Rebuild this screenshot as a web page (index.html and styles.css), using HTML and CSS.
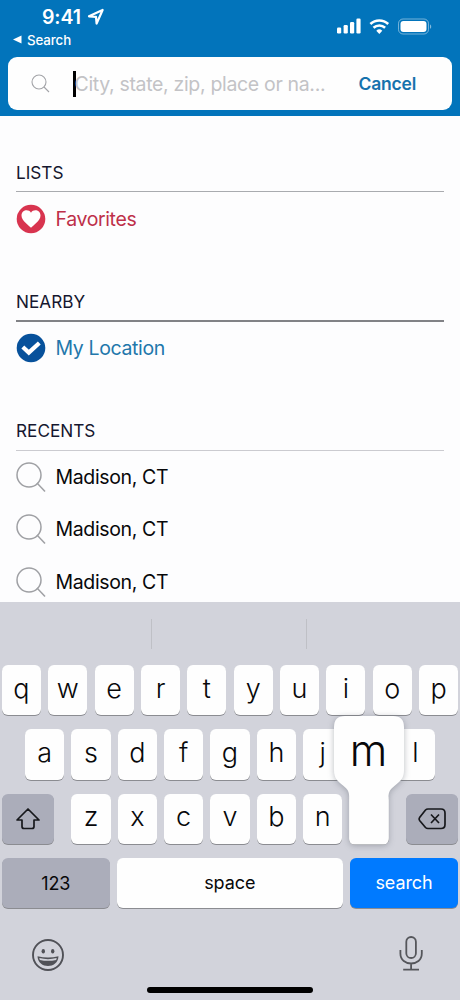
FILE: index.html
```html
<!DOCTYPE html>
<html lang="en">
<head>
<meta charset="utf-8">
<title>Search</title>
<link rel="stylesheet" href="styles.css">
</head>
<body>
<div class="phone">
  <header class="header">
    <div class="status">
      <div class="status-left">
        <div class="clock"><span class="time">9:41</span>
          <svg class="arrow" width="18" height="18" viewBox="0 0 18 18"><path d="M2 8.300 15.600 2 9.600 15.600 9 8.900Z" fill="none" stroke="#fff" stroke-width="2.200" stroke-linejoin="round"/></svg>
        </div>
        <div class="back"><svg width="9" height="9" viewBox="0 0 9 9"><path d="M0 4.500 8.500.500v8Z" fill="#fff"/></svg><span class="back-label">Search</span></div>
      </div>
      <svg class="indicators" width="96" height="20" viewBox="0 0 96 20">
        <g fill="#fff">
          <rect x="1" y="11.500" width="4.200" height="6" rx="1.200"/><rect x="7.600" y="9" width="4.200" height="8.500" rx="1.200"/><rect x="14" y="6" width="4.200" height="11.500" rx="1.200"/><rect x="20.400" y="2.500" width="4.200" height="15" rx="1.200"/>
          <path d="m43.300 18-3-3.300a4.500 4.500 0 0 1 6 0Z"/>
          <rect x="64.500" y="5" width="26" height="11" rx="3"/>
          <path d="M94 8.500c1.600.300 1.600 4 0 4.300Z" opacity=".5"/>
        </g>
        <path d="M34.400 8a13 13 0 0 1 17.800 0M37.500 11.700a8.700 8.700 0 0 1 11.600 0" fill="none" stroke="#fff" stroke-width="2.600"/>
        <rect x="62.500" y="3" width="30" height="15" rx="4.500" fill="none" stroke="#fff" opacity=".45"/>
      </svg>
    </div>
    <div class="search">
      <svg class="search-icon" width="19" height="19" viewBox="0 0 19 19"><g fill="none" stroke="#a3a4a8" stroke-width="1.100"><circle cx="8" cy="8" r="7"/><path d="m13 13 5 5"/></g></svg>
      <span class="caret"></span>
      <span class="placeholder">City, state, zip, place or na...</span>
      <span class="cancel">Cancel</span>
    </div>
  </header>

  <main class="content">
    <section class="group">
      <h2 class="heading">LISTS</h2>
      <div class="row favorite">
        <svg class="icon" width="30" height="30" viewBox="0 0 30 30"><circle cx="15" cy="15" r="14.300" fill="#d8344f"/><path d="M15 23.800C12.500 21 5.500 16.800 5.500 11.500c0-5.500 7-6.800 9.500-2.800 2.500-4 9.500-2.700 9.500 2.800 0 5.300-7 9.500-9.500 12.300Z" fill="#fff"/></svg>
        <span>Favorites</span>
      </div>
    </section>
    <section class="group">
      <h2 class="heading heading-dark">NEARBY</h2>
      <div class="row location">
        <svg class="icon" width="30" height="30" viewBox="0 0 30 30"><circle cx="15" cy="15" r="14.300" fill="#07519b"/><path d="m6.800 14 6 5.600L23.300 10" fill="none" stroke="#fff" stroke-width="4.200"/></svg>
        <span>My Location</span>
      </div>
    </section>
    <section class="group">
      <h2 class="heading heading-light">RECENTS</h2>
      <div class="row"><svg class="icon" width="30" height="30" viewBox="0 0 30 30"><g fill="none" stroke="#9fa0a4" stroke-width="1.500"><circle cx="13" cy="13" r="12"/><path d="m21 21 8 8.500"/></g></svg><span>Madison, CT</span></div>
      <div class="row"><svg class="icon" width="30" height="30" viewBox="0 0 30 30"><g fill="none" stroke="#9fa0a4" stroke-width="1.500"><circle cx="13" cy="13" r="12"/><path d="m21 21 8 8.500"/></g></svg><span>Madison, CT</span></div>
      <div class="row"><svg class="icon" width="30" height="30" viewBox="0 0 30 30"><g fill="none" stroke="#9fa0a4" stroke-width="1.500"><circle cx="13" cy="13" r="12"/><path d="m21 21 8 8.500"/></g></svg><span>Madison, CT</span></div>
    </section>
  </main>

  <div class="keyboard">
    <div class="suggestions"><span></span><span></span><span></span></div>
    <div class="keys">
      <div class="key-row"><span class="key">q</span><span class="key">w</span><span class="key">e</span><span class="key">r</span><span class="key">t</span><span class="key">y</span><span class="key">u</span><span class="key">i</span><span class="key">o</span><span class="key">p</span></div>
      <div class="key-row"><span class="key">a</span><span class="key">s</span><span class="key">d</span><span class="key">f</span><span class="key">g</span><span class="key">h</span><span class="key">j</span><span class="key"></span><span class="key">l</span></div>
      <div class="key-row spread">
        <span class="key mod"><svg width="26" height="24" viewBox="0 0 26 24"><path d="M13 2 2 13h5v6.500q0 2 2 2h8q2 0 2-2V13h5Z" fill="none" stroke="#17181c" stroke-width="1.700" stroke-linejoin="round"/></svg></span>
        <div class="key-row">
          <span class="key">z</span><span class="key">x</span><span class="key">c</span><span class="key">v</span><span class="key">b</span><span class="key">n</span>
          <span class="key pressed">
            <svg class="bubble" width="90" height="140" viewBox="0 0 90 140"><path d="M21 6H69Q80 6 80 17V60C80 69 76 71 71 75.500C66 80 64.500 81 64.500 88V129Q64.500 134.500 59 134.500H31Q25.200 134.500 25.200 129V88C25.200 81 24 80 19 75.500C14 71 10 69 10 60V17Q10 6 21 6Z" fill="#fefefe"/></svg>
            <span class="big">m</span>
          </span>
        </div>
        <span class="key mod"><svg width="30" height="24" viewBox="0 0 30 24"><path d="M11 2H24Q28 2 28 6V17.500Q28 21.500 24 21.500H11Q9.500 21.500 8.500 20.500L2.600 13.500Q1.500 12 2.600 10.500L8.500 3Q9.500 2 11 2ZM14 7.500l8 8.500m0-8.500-8 8.500" fill="none" stroke="#17181c" stroke-width="1.700" stroke-linejoin="round"/></svg></span>
      </div>
      <div class="key-row bottom"><span class="key mod label">123</span><span class="key label">space</span><span class="key go label">search</span></div>
    </div>
    <div class="dock">
      <svg width="34" height="34" viewBox="0 0 34 34"><circle cx="17" cy="17" r="15" fill="none" stroke="#505157" stroke-width="1.900"/><ellipse cx="12.300" cy="13.300" rx="1.700" ry="2.300" fill="#505157"/><ellipse cx="21.700" cy="13.300" rx="1.700" ry="2.300" fill="#505157"/><path d="M6.500 18.200q10.500 2.800 21 0c-.5 13-20.500 13-21 0Z" fill="#505157"/><path d="M8.300 20q8.700 2.300 17.400 0l-.5 1.900q-8.200 1.800-16.400 0Z" fill="#d2d3db"/></svg>
      <svg width="26" height="37" viewBox="0 0 26 37"><g fill="none" stroke="#55565b" stroke-width="1.800"><rect x="8.300" y="2" width="9.600" height="21" rx="4.800"/><path d="M2.400 15v3.500c0 13.300 21.400 13.300 21.400 0V15M13.100 28.500v6M5.200 34.600h15.800"/></g></svg>
    </div>
    <div class="home"></div>
  </div>
</div>
</body>
</html>
```
FILE: styles.css
```css
* { box-sizing: border-box; }
body { margin: 0; font-family: Inter, "Liberation Sans", sans-serif; background: #fdfdfe; }
svg { display: block; flex: none; }
.phone { width: 460px; height: 1000px; display: flex; flex-direction: column; overflow: hidden; background: #fdfdfe; }
.header { height: 116px; flex: none; background: #0274bb; color: #fff; }
.status { height: 57px; display: flex; justify-content: space-between; padding: 7px 2px 0 13px; }
.clock { display: flex; align-items: center; gap: 6px; height: 20px; padding-left: 29px; }
.time { font-size: 19.500px; font-weight: 600; letter-spacing: -0.100px; }
.back { display: flex; align-items: center; gap: 5px; height: 18px; padding-top: 7px; }
.back-label { font-size: 13.300px; font-weight: 500; letter-spacing: -0.100px; }
.indicators { margin: 9px 26px 0 0; }
.search { height: 53px; margin: 0 8px; padding-left: 23px; background: #fefefe; border-radius: 9px; display: flex; align-items: center; white-space: nowrap; }
.search-icon { margin-right: 23px; }
.caret { width: 3px; height: 26px; background: #000; }
.placeholder { width: 284px; margin-left: -1.500px; color: #c3c3c6; font-size: 19.500px; letter-spacing: -0.330px; }
.cancel { color: #1672ad; font-size: 17.500px; font-weight: 600; letter-spacing: -0.200px; }
.content { height: 486px; flex: none; overflow: hidden; padding: 0 16px; }
.heading { margin: 0; height: 76px; padding-top: 46px; line-height: 21px; font-size: 17.200px; font-weight: 400; color: #15172f; border-bottom: 1px solid #a9abaf; }
.heading-dark { border-bottom: 2px solid #818286; height: 77px; margin-bottom: -1px; }
.heading-light { border-bottom-color: #cbcbd0; height: 77px; margin-bottom: -0.500px; }
.row { display: flex; align-items: center; gap: 9.500px; height: 52.500px; font-size: 19.500px; letter-spacing: -0.370px; color: #08080a; }
.group:not(:last-child) .row { height: 53px; }
.row.favorite { color: #be3049; }
.row.location { color: #2277ab; }
.keyboard { height: 398px; flex: none; background: #d2d3db; }
.suggestions { height: 63px; display: grid; grid-template-columns: 152px 155px 1fr; align-items: center; }
.suggestions span { height: 30px; border-right: 1px solid #bfc0c6; }
.suggestions span:last-child { border: 0; }
.keys { display: flex; flex-direction: column; align-items: center; gap: 14px; }
.key-row { display: flex; gap: 7.100px; height: 50.300px; }
.spread { width: 456.500px; justify-content: space-between; }
.key { width: 39.250px; height: 50.300px; display: flex; align-items: center; justify-content: center; padding-bottom: 4px; background: #fefefe; border-radius: 6px; box-shadow: 0 1px 0 #8b8c91; font-size: 27px; font-weight: 350; color: #08080a; }
.mod { width: 52.500px; background: #abadba; padding: 0; }
.bottom { width: 456.500px; }
.bottom .mod { width: 108px; }
.bottom .key { flex: none; }
.bottom .key:nth-child(2) { flex: 1; }
.bottom .go { width: 108.500px; background: #007aff; color: #fff; }
.key.label { font-size: 18px; font-weight: 400; letter-spacing: -0.100px; padding-bottom: 2px; }
.key.mod.label { padding-bottom: 0; }
.pressed { position: relative; }
.bubble { position: absolute; left: -25.200px; top: -84px; filter: drop-shadow(0 1px 3px rgba(60, 70, 80, .35)); }
.big { position: absolute; left: -16px; top: -74px; width: 70px; text-align: center; line-height: 60px; font-size: 43px; font-weight: 350; }
.dock { height: 74px; display: flex; justify-content: space-between; align-items: flex-end; padding: 0 36px 10px 31px; }
.home { width: 166px; height: 6px; margin: 5px auto 0; border-radius: 3px; background: #000; }
```
